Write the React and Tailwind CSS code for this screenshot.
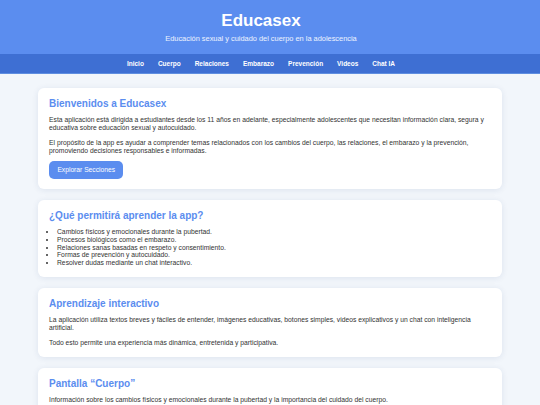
export default function App() {
  const nav = ['Inicio', 'Cuerpo', 'Relaciones', 'Embarazo', 'Prevención', 'Videos', 'Chat IA']
  const cardCls = 'bg-white rounded-[6px] shadow-[0_1px_6px_rgba(30,60,120,0.10)] px-[11px] pt-[10px] pb-[10px]'
  const hCls = 'text-[10px] leading-[12px] font-bold text-[#5b8def] mb-[6px]'
  const pCls = 'text-[6.75px] leading-[7.8px] text-[#333]'

  return (
    <div className="min-h-screen bg-[#f2f6fb]" style={{ fontFamily: '"Liberation Sans", Arial, sans-serif' }}>
      {/* Cabecera */}
      <header className="bg-[#5b8def] text-white text-center pt-[10.7px] pb-[10.5px] pr-[18px]">
        <h1 className="text-[17px] leading-[20px] font-bold">Educasex</h1>
        <p className="text-[7.4px] leading-[9px] mt-[3.8px] text-white/90">
          Educación sexual y cuidado del cuerpo en la adolescencia
        </p>
      </header>

      {/* Menú */}
      <nav className="bg-[#3e6fd3] h-[20px] flex items-center justify-center gap-[14px] pr-[18px] border-b border-[#5f8ee0]">
        {nav.map(item => (
          <a key={item} href="#" className="text-white text-[6.5px] font-bold">{item}</a>
        ))}
      </nav>

      <main className="mx-[38px] pt-[14px] pb-[20px] flex flex-col gap-[11px]">
        <section className={cardCls}>
          <h2 className={hCls}>Bienvenidos a Educasex</h2>
          <p className={pCls + ' mb-[7.8px]'}>
            Esta aplicación está dirigida a estudiantes desde los 11 años en adelante, especialmente adolescentes que necesitan información clara, segura y educativa sobre educación sexual y autocuidado.
          </p>
          <p className={pCls}>
            El propósito de la app es ayudar a comprender temas relacionados con los cambios del cuerpo, las relaciones, el embarazo y la prevención, promoviendo decisiones responsables e informadas.
          </p>
          <button className="mt-[5.2px] h-[17.4px] px-[8.4px] rounded-[5px] bg-[#5b8def] text-white text-[6.7px]">
            Explorar Secciones
          </button>
        </section>

        <section className={cardCls}>
          <h2 className={hCls}>¿Qué permitirá aprender la app?</h2>
          <ul className={pCls + ' list-disc pl-[8px]'}>
            <li>Cambios físicos y emocionales durante la pubertad.</li>
            <li>Procesos biológicos como el embarazo.</li>
            <li>Relaciones sanas basadas en respeto y consentimiento.</li>
            <li>Formas de prevención y autocuidado.</li>
            <li>Resolver dudas mediante un chat interactivo.</li>
          </ul>
        </section>

        <section className={cardCls}>
          <h2 className={hCls}>Aprendizaje interactivo</h2>
          <p className={pCls + ' mb-[7.8px]'}>
            La aplicación utiliza textos breves y fáciles de entender, imágenes educativas, botones simples, videos explicativos y un chat con inteligencia artificial.
          </p>
          <p className={pCls}>
            Todo esto permite una experiencia más dinámica, entretenida y participativa.
          </p>
        </section>

        <section className={cardCls}>
          <h2 className={hCls}>Pantalla “Cuerpo”</h2>
          <p className={pCls + ' mb-[7.8px]'}>
            Información sobre los cambios físicos y emocionales durante la pubertad y la importancia del cuidado del cuerpo.
          </p>
          <p className={pCls}>
            Incluye imágenes educativas y explicaciones sencillas para comprender mejor cada etapa.
          </p>
        </section>
      </main>
    </div>
  )
}
